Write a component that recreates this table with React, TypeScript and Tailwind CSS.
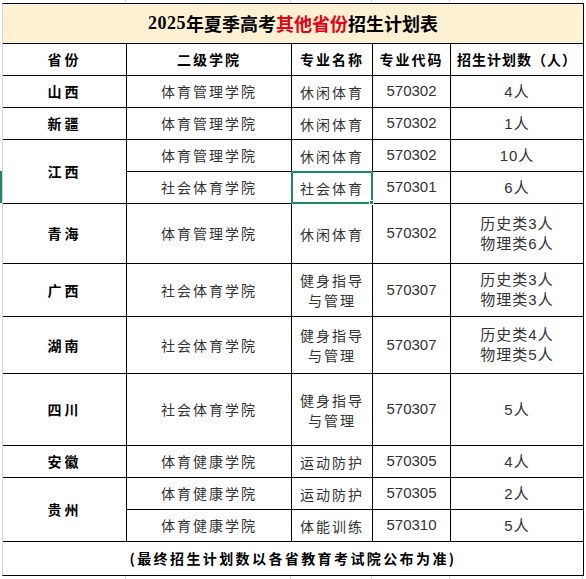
import React from 'react'

const cjk = "font-['Noto_Sans_CJK_SC',sans-serif]"
const num = "font-['Liberation_Sans','Noto_Sans_CJK_SC',sans-serif]"

type Row = {
  prov?: string
  span?: boolean
  college: string
  major: string[]
  code: string
  count: string[]
  selected?: boolean
}

const rows: Row[] = [
  { prov: '山西', college: '体育管理学院', major: ['休闲体育'], code: '570302', count: ['4人'] },
  { prov: '新疆', college: '体育管理学院', major: ['休闲体育'], code: '570302', count: ['1人'] },
  { prov: '江西', span: true, college: '体育管理学院', major: ['休闲体育'], code: '570302', count: ['10人'] },
  { college: '社会体育学院', major: ['社会体育'], code: '570301', count: ['6人'], selected: true },
  { prov: '青海', college: '体育管理学院', major: ['休闲体育'], code: '570302', count: ['历史类3人', '物理类6人'] },
  { prov: '广西', college: '社会体育学院', major: ['健身指导', '与管理'], code: '570307', count: ['历史类3人', '物理类3人'] },
  { prov: '湖南', college: '社会体育学院', major: ['健身指导', '与管理'], code: '570307', count: ['历史类4人', '物理类5人'] },
  { prov: '四川', college: '社会体育学院', major: ['健身指导', '与管理'], code: '570307', count: ['5人'] },
  { prov: '安徽', college: '体育健康学院', major: ['运动防护'], code: '570305', count: ['4人'] },
  { prov: '贵州', span: true, college: '体育健康学院', major: ['运动防护'], code: '570305', count: ['2人'] },
  { college: '体育健康学院', major: ['体能训练'], code: '570310', count: ['5人'] },
]

const cell = 'bg-white flex flex-col items-center justify-center text-center'

function GridStrip({ h }: { h: string }) {
  return (
    <div className={`flex ${h} pl-[2px]`}>
      <div className="w-[124px] border-r border-[#dadada]" />
      <div className="w-[165px] border-r border-[#dadada]" />
      <div className="w-[81px] border-r border-[#dadada]" />
      <div className="w-[78px] border-r border-[#dadada]" />
      <div className="w-[133px] border-r border-[#dadada]" />
    </div>
  )
}

export default function App() {
  return (
    <div className="relative w-[586px] h-[579px] bg-white overflow-hidden">
      <GridStrip h="h-[3px]" />
      <div className="pl-[2px]">
        <div className="grid w-[582px] grid-cols-[123px_164px_80px_77px_132px] grid-rows-[39px_31px_31px_31px_31px_31px_59px_52px_56px_71px_31px_31px_31px_33px] gap-px bg-black border border-black border-l-[#d4d4d4]">
          <div className={`col-span-5 bg-[#fef0d3] flex items-center justify-center text-[18px] font-bold text-black ${cjk}`}>
            <span className="font-['Liberation_Serif',serif] tracking-[0.5px]">2025</span>
            <span>年夏季高考</span>
            <span className="text-[#e60012]">其他省份</span>
            <span>招生计划表</span>
          </div>

          {['省份', '二级学院', '专业名称', '专业代码', '招生计划数（人）'].map((h, i) => (
            <div key={h} className={`${cell} text-[14px] font-bold text-black ${cjk} ${i === 0 ? 'tracking-[3px]' : i === 4 ? 'tracking-[1px]' : 'tracking-[2px]'}`}>
              {h}
            </div>
          ))}

          {rows.flatMap((r, i) => {
            const out: React.ReactNode[] = []
            if (r.prov) {
              out.push(
                <div key={`p${i}`} className={`${cell} ${r.span ? 'row-span-2' : ''} text-[14px] font-bold text-black tracking-[3px] ${cjk}`}>
                  {r.prov}
                </div>
              )
            }
            out.push(
              <div key={`c${i}`} className={`${cell} text-[14px] text-[#333] tracking-[2px] ${cjk}`}>
                {r.college}
              </div>
            )
            out.push(
              <div key={`m${i}`} className={`${cell} relative text-[14px] leading-[20px] text-[#333] tracking-[2px] ${cjk}`}>
                {r.major.map((m) => (
                  <div key={m}>{m}</div>
                ))}
                {r.selected && (
                  <div className="absolute -left-px -top-px -right-px -bottom-px border-2 border-[#1f8a63]">
                    <div className="absolute -right-[3px] -bottom-[3px] w-[5px] h-[5px] bg-[#1f8a63] border border-white" />
                  </div>
                )}
              </div>
            )
            out.push(
              <div key={`d${i}`} className={`${cell} text-[15px] text-[#333] ${num}`}>
                {r.code}
              </div>
            )
            out.push(
              <div key={`n${i}`} className={`${cell} text-[15px] leading-[20px] text-[#333] tracking-[1px] ${num}`}>
                {r.count.map((c) => (
                  <div key={c}>{c}</div>
                ))}
              </div>
            )
            return out
          })}

          <div className={`col-span-5 bg-white flex items-center justify-center text-[14px] font-bold text-black tracking-[2.4px] ${cjk}`}>
            (最终招生计划数以各省教育考试院公布为准)
          </div>
        </div>
      </div>
      <GridStrip h="h-[4px]" />
      <div className="absolute left-0 top-[171px] w-[2px] h-[32px] bg-[#1f8a63]" />
    </div>
  )
}
